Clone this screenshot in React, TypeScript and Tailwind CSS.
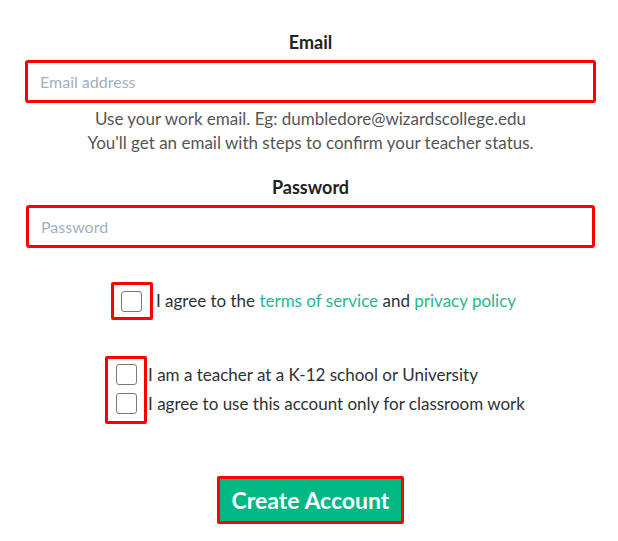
import { useState } from "react";

function Box({ checked, onToggle }: { checked: boolean; onToggle: () => void }) {
  return (
    <button
      type="button"
      onClick={onToggle}
      className="w-[21px] h-[21px] rounded-[3px] border border-[#7a7a7a] bg-white flex items-center justify-center"
    >
      {checked && <span className="block w-[11px] h-[11px] rounded-[2px] bg-[#00b884]" />}
    </button>
  );
}

export default function App() {
  const [email, setEmail] = useState("");
  const [password, setPassword] = useState("");
  const [terms, setTerms] = useState(false);
  const [teacher, setTeacher] = useState(false);
  const [classroom, setClassroom] = useState(false);

  return (
    <div className="w-full min-h-[541px] bg-white pl-[25px] pr-[22px] pt-[30px] font-['Lato',sans-serif] text-[17px]">
      <label htmlFor="email" className="block text-center font-bold text-[18px] leading-6 text-[#222]">
        Email
      </label>
      <input
        id="email"
        type="email"
        value={email}
        onChange={(e) => setEmail(e.target.value)}
        placeholder="Email address"
        className="mt-[6px] block w-full h-[43px] border-[3px] border-[#ff0000] rounded-[3px] px-3 text-[16px] text-[#333] placeholder:text-[#a3afbf] outline-none"
      />
      <p className="mt-1 text-center leading-6 text-[#555]">
        Use your work email. Eg: dumbledore@wizardscollege.edu
        <br />
        You'll get an email with steps to confirm your teacher status.
      </p>

      <label htmlFor="password" className="mt-5 block text-center font-bold text-[18px] leading-6 text-[#222]">
        Password
      </label>
      <input
        id="password"
        type="password"
        value={password}
        onChange={(e) => setPassword(e.target.value)}
        placeholder="Password"
        className="mt-[6px] mx-px block w-[calc(100%-2px)] h-[43px] border-[3px] border-[#ff0000] rounded-[3px] px-3 text-[16px] text-[#333] placeholder:text-[#a3afbf] outline-none"
      />

      <div className="mt-[34px] pl-[6px] flex justify-center items-center">
        <div className="w-[42px] h-[38px] border-[3px] border-[#ff0000] rounded-[2px] flex items-center justify-center">
          <Box checked={terms} onToggle={() => setTerms(!terms)} />
        </div>
        <span className="ml-[3px] text-[#2d3136]">
          I agree to the <a className="text-[#1fb98c]">terms of service</a> and{" "}
          <a className="text-[#1fb98c]">privacy policy</a>
        </span>
      </div>

      <div className="mt-[36px] pl-[9px] flex justify-center">
        <div className="flex">
          <div className="w-[42px] h-[68px] border-[3px] border-[#ff0000] rounded-[2px] flex flex-col items-center pt-[5px] gap-2">
            <Box checked={teacher} onToggle={() => setTeacher(!teacher)} />
            <Box checked={classroom} onToggle={() => setClassroom(!classroom)} />
          </div>
          <div className="ml-px pt-[8px] flex flex-col gap-2 text-[#2d3136]">
            <span className="h-[21px] flex items-center">I am a teacher at a K-12 school or University</span>
            <span className="h-[21px] flex items-center">I agree to use this account only for classroom work</span>
          </div>
        </div>
      </div>

      <div className="mt-[52px] flex justify-center">
        <button
          type="submit"
          className="w-[187px] h-[48px] border-[3px] border-[#ff0000] rounded-[2px] bg-[#00b884] text-white font-bold text-[23px]"
        >
          Create Account
        </button>
      </div>
    </div>
  );
}
